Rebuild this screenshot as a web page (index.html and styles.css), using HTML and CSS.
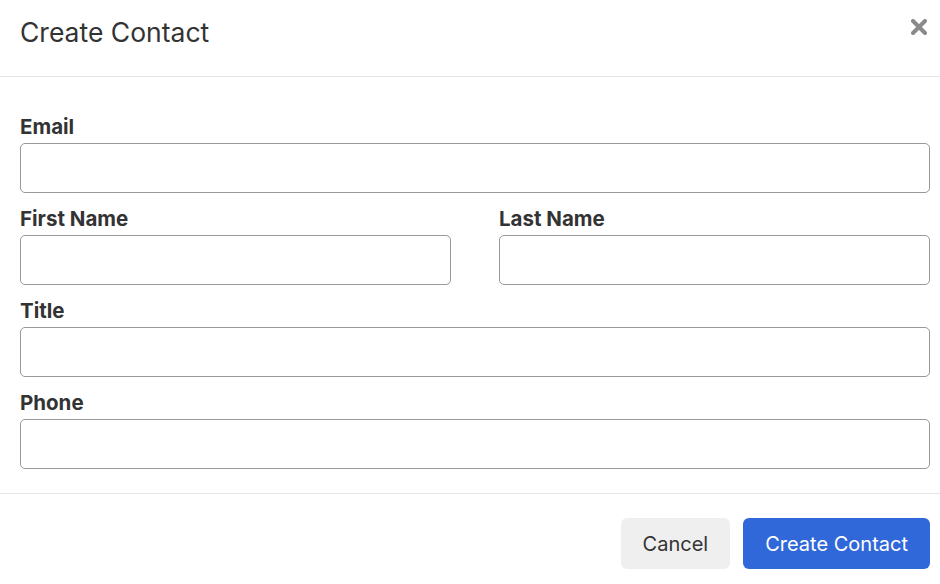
FILE: index.html
```html
<!DOCTYPE html>
<html lang="en">
<head>
    <meta charset="UTF-8">
    <meta name="viewport" content="width=device-width, initial-scale=1.0">
    <title>Create Contact</title>
    <link rel="stylesheet" href="styles.css">
</head>
<body>
    <div class="modal">
        <div class="modal-header">
            <h1>Create Contact</h1>
            <button class="close" aria-label="Close">
                <svg width="16" height="16" viewBox="0 0 16 16">
                    <path d="M2 2 L14 14 M14 2 L2 14" stroke="#8a8a8a" stroke-width="4" stroke-linecap="round"/>
                </svg>
            </button>
        </div>
        <div class="modal-body">
            <div class="field">
                <label for="email">Email</label>
                <input id="email" type="text">
            </div>
            <div class="row">
                <div class="field">
                    <label for="first">First Name</label>
                    <input id="first" type="text">
                </div>
                <div class="field">
                    <label for="last">Last Name</label>
                    <input id="last" type="text">
                </div>
            </div>
            <div class="field">
                <label for="title">Title</label>
                <input id="title" type="text">
            </div>
            <div class="field">
                <label for="phone">Phone</label>
                <input id="phone" type="text">
            </div>
        </div>
        <div class="modal-footer">
            <button class="btn btn-cancel">Cancel</button>
            <button class="btn btn-primary">Create Contact</button>
        </div>
    </div>
</body>
</html>
```

FILE: styles.css
```css
body {
    margin: 0;
    font-family: 'Inter', 'Liberation Sans', sans-serif;
    color: #333;
    background-color: #fff;
}
.modal {
    width: 940px;
}
.modal-header {
    display: flex;
    justify-content: space-between;
    align-items: flex-start;
    height: 77px;
    padding: 0 13px 0 20px;
    border-bottom: 1px solid #e5e5e5;
    box-sizing: border-box;
}
.modal-header h1 {
    margin: 0;
    padding-top: 16px;
    font-size: 26.5px;
    line-height: 32px;
    font-weight: 400;
    color: #333;
}
.close {
    border: none;
    background: none;
    padding: 0;
    margin-top: 19px;
    line-height: 0;
    cursor: pointer;
}
.modal-body {
    padding: 38px 10px 10px 20px;
}
.field {
    display: flex;
    flex-direction: column;
    margin-bottom: 14px;
}
.row {
    display: flex;
    gap: 48px;
}
.row .field {
    flex: 1;
}
label {
    font-size: 20.5px;
    font-weight: 700;
    line-height: 24px;
    margin-bottom: 4px;
    color: #333;
}
input {
    height: 50px;
    box-sizing: border-box;
    border: 1px solid #999;
    border-radius: 5px;
    font-size: 18px;
    padding: 0 12px;
    font-family: inherit;
}
.modal-footer {
    display: flex;
    justify-content: flex-end;
    gap: 13px;
    padding: 24px 10px 15px 20px;
    border-top: 1px solid #e5e5e5;
}
.btn {
    height: 51px;
    border: none;
    border-radius: 6px;
    font-family: inherit;
    font-size: 20px;
    padding: 0 22px;
    cursor: pointer;
}
.btn-cancel {
    background-color: #efefef;
    color: #333;
}
.btn-primary {
    background-color: #3068d9;
    color: #fff;
}
```
